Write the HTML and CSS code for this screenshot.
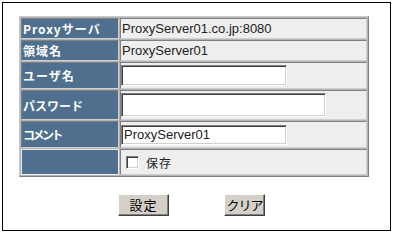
FILE: index.html
```html
<!DOCTYPE html>
<html lang="ja">
<head>
<meta charset="utf-8">
<title>Proxy</title>
<link rel="stylesheet" href="styles.css">
</head>
<body>
<div class="frame">
  <table class="form">
    <tr class="r1">
      <th>Proxyサーバ</th>
      <td class="val">ProxyServer01.co.jp:8080</td>
    </tr>
    <tr class="r2">
      <th>領域名</th>
      <td class="val">ProxyServer01</td>
    </tr>
    <tr class="r3">
      <th>ユーザ名</th>
      <td><input class="field short" type="text"></td>
    </tr>
    <tr class="r4">
      <th class="mid">パスワード</th>
      <td><input class="field long" type="password"></td>
    </tr>
    <tr class="r5">
      <th class="tight">コメント</th>
      <td><input class="field short thin" type="text" value="ProxyServer01"></td>
    </tr>
    <tr class="r6">
      <th class="empty"></th>
      <td><label class="save"><input class="check" type="checkbox"><span>保存</span></label></td>
    </tr>
  </table>
  <div class="actions">
    <button class="btn set" type="button">設定</button>
    <button class="btn clear" type="button">クリア</button>
  </div>
</div>
</body>
</html>
```

FILE: styles.css
```css
html, body {
  margin: 0;
  padding: 0;
  background: #ffffff;
}

body {
  width: 394px;
  height: 234px;
  overflow: hidden;
}

.frame {
  box-sizing: border-box;
  margin: 2px 0 0 2px;
  width: 389px;
  height: 229px;
  border: 1px solid #000000;
  padding: 13px 0 0 16px;
}

.form {
  border-collapse: separate;
  border-spacing: 1px;
  border: 1px solid;
  border-color: #c8c8c8 #808080 #808080 #c8c8c8;
  background: #b4b4b4;
  width: 350px;
  table-layout: fixed;
}

.form th,
.form td {
  box-sizing: border-box;
  border: 1px solid;
  border-color: #808080 #d0d0d0 #d0d0d0 #808080;
  padding: 0;
  vertical-align: middle;
}

.form th {
  width: 98px;
  background: #4f6f8e;
  color: #ffffff;
  text-align: left;
  padding-left: 1px;
  font-family: "Noto Sans CJK JP", "Liberation Sans", sans-serif;
  font-weight: bold;
  font-size: 12px;
  letter-spacing: 1px;
  white-space: nowrap;
}

.form th.mid {
  letter-spacing: 0;
}

.form th.tight {
  letter-spacing: -2.5px;
}

.form th.empty {
  border-color: #e8e8e8 #f0f0f0 #f0f0f0 #e8e8e8;
}

.form td {
  background: #eeeeee;
  font-family: "Liberation Sans", Arial, sans-serif;
  font-size: 13px;
  color: #222222;
}

.form td.val {
  padding-left: 1px;
}

.r1 th, .r1 td { height: 21px; }
.r2 th, .r2 td { height: 21px; }
.r3 th, .r3 td { height: 27px; }
.r4 th, .r4 td { height: 30px; }
.r5 th, .r5 td { height: 27px; }
.r6 th, .r6 td { height: 26px; }

.field {
  display: block;
  box-sizing: border-box;
  margin: 0;
  padding: 0 2px;
  background: #ffffff;
  border: 1px solid;
  border-color: #808080 #ffffff #ffffff #808080;
  box-shadow: inset 1px 1px 0 #404040, inset -1px -1px 0 #d4d0c8;
  font-family: "Liberation Sans", Arial, sans-serif;
  font-size: 13px;
  color: #222222;
  outline: none;
}

.field.short {
  width: 166px;
  height: 21px;
}

.field.long {
  width: 205px;
  height: 24px;
}

.field.thin {
  height: 20px;
}

.save {
  display: flex;
  align-items: center;
  padding-left: 5px;
  font-family: "Noto Sans CJK JP", sans-serif;
  font-size: 12px;
  color: #222222;
  letter-spacing: 1px;
}

.check {
  appearance: none;
  -webkit-appearance: none;
  box-sizing: border-box;
  width: 13px;
  height: 13px;
  margin: 0 7px 0 0;
  background: #ffffff;
  border: 1px solid;
  border-color: #808080 #ffffff #ffffff #808080;
  box-shadow: inset 1px 1px 0 #404040, inset -1px -1px 0 #d4d0c8;
}

.actions {
  display: flex;
  gap: 55px;
  margin-top: 17px;
  padding-left: 99px;
}

.btn {
  box-sizing: border-box;
  height: 22px;
  margin: 0;
  padding: 0;
  background: #d4d0c8;
  border: 1px solid;
  border-color: #ffffff #404040 #404040 #ffffff;
  box-shadow: inset -1px -1px 0 #808080;
  font-family: "Noto Sans CJK JP", sans-serif;
  font-size: 13px;
  color: #000000;
  line-height: 18px;
}

.btn.set {
  width: 51px;
  letter-spacing: 1px;
}

.btn.clear {
  width: 41px;
  letter-spacing: -1px;
}
```
